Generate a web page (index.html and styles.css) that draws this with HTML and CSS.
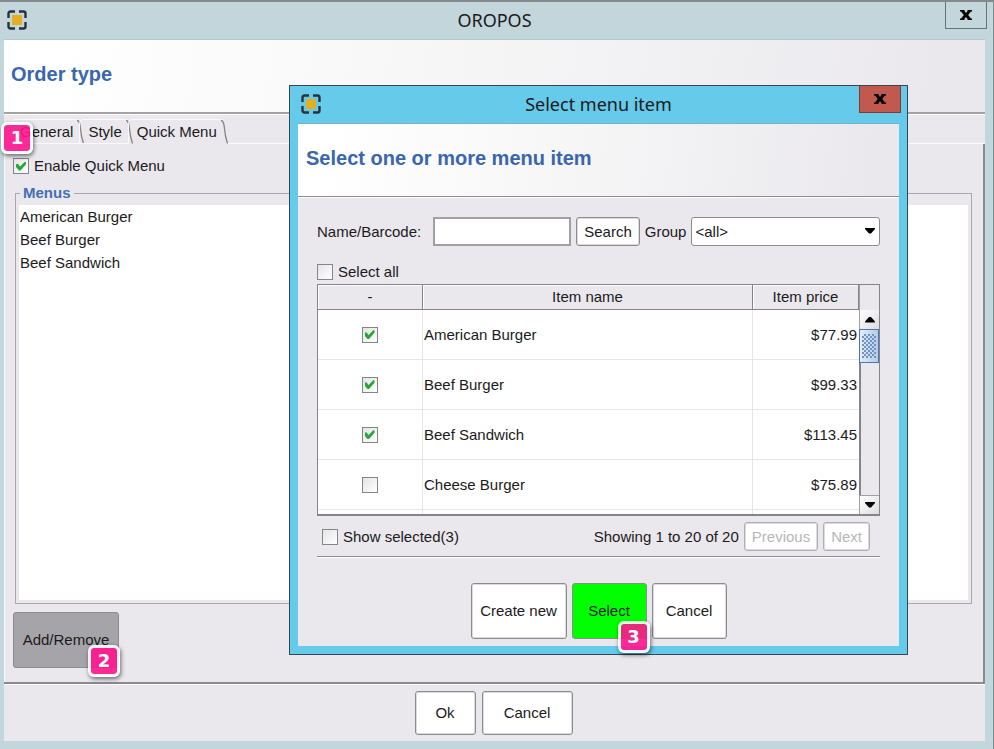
FILE: index.html
```html
<!DOCTYPE html>
<html lang="en">
<head>
<meta charset="utf-8">
<title>OROPOS</title>
<link rel="stylesheet" href="styles.css">
</head>
<body>
<svg class="sprite" aria-hidden="true">
  <symbol id="logo" viewBox="0 0 20 20">
    <path d="M1.500 8V3.500Q1.500 1.500 3.500 1.500H8M12 1.500H16.500Q18.500 1.500 18.500 3.500V8M18.500 12V16.500Q18.500 18.500 16.500 18.500H12M8 18.500H3.500Q1.500 18.500 1.500 16.500V12" fill="none" stroke="#28323b" stroke-width="2.400"/>
    <rect x="5" y="5" width="10" height="10" fill="#e3b024"/>
  </symbol>
  <symbol id="close" viewBox="0 0 12 10">
    <path d="M0 0H4.500V1L6 3 7.500 1V0H12V1.500H11L8.200 5 11 8.500H12V10H7.500V9L6 7 4.500 9V10H0V8.500H1L3.800 5 1 1.500H0Z" fill="#000"/>
  </symbol>
  <symbol id="tab-edge" viewBox="0 0 10 25">
    <path d="M0 1.500Q2 1.500 3 6L4.500 17 6.500 24.500" fill="none" stroke="#858488" stroke-width="1.300"/>
  </symbol>
  <symbol id="down" viewBox="0 0 10 6"><path d="M0 0H10V1L6 5.500H4L0 1Z"/></symbol>
  <symbol id="up" viewBox="0 0 10 6"><path d="M0 5.500H10V4.500L6 0H4L0 4.500Z"/></symbol>
</svg>

<main class="window">
  <header class="titlebar">
    <svg class="logo"><use href="#logo"/></svg>
    <h1 class="caption">OROPOS</h1>
    <button class="close" aria-label="Close window"><svg><use href="#close"/></svg></button>
  </header>
  <div class="content">
    <div class="banner"><h2>Order type</h2></div>
    <div class="tabs" role="tablist">
      <button class="tab" role="tab">General<svg><use href="#tab-edge"/></svg></button>
      <button class="tab" role="tab">Style<svg><use href="#tab-edge"/></svg></button>
      <button class="tab selected" role="tab" aria-selected="true">Quick Menu<svg><use href="#tab-edge"/></svg></button>
      <span class="tab-rest"></span>
      <span class="badge badge-tab">1</span>
    </div>
    <section class="panel">
      <label class="check"><input type="checkbox" checked>Enable Quick Menu</label>
      <fieldset class="menus">
        <legend>Menus</legend>
        <ul>
          <li>American Burger</li>
          <li>Beef Burger</li>
          <li>Beef Sandwich</li>
        </ul>
      </fieldset>
      <div class="panel-actions">
        <span class="marked">
          <button class="btn tall pressed">Add/Remove</button>
          <span class="badge badge-button">2</span>
        </span>
      </div>
    </section>
    <footer class="footer">
      <button class="btn medium ok">Ok</button>
      <button class="btn medium cancel">Cancel</button>
    </footer>
  </div>
</main>

<div class="dialog" role="dialog" aria-labelledby="dialog-caption">
  <header class="titlebar">
    <svg class="logo"><use href="#logo"/></svg>
    <h2 class="caption" id="dialog-caption">Select menu item</h2>
    <button class="close" aria-label="Close dialog"><svg><use href="#close"/></svg></button>
  </header>
  <div class="content">
    <div class="banner"><h2>Select one or more menu item</h2></div>
    <div class="dialog-body">
      <div class="search-row">
        <label for="name">Name/Barcode:</label>
        <input id="name" class="field" type="text">
        <button class="btn">Search</button>
        <label for="group">Group</label>
        <span class="combo">
          <select id="group"><option>&lt;all&gt;</option></select>
          <svg><use href="#down"/></svg>
        </span>
      </div>
      <label class="check"><input type="checkbox">Select all</label>
      <div class="items">
        <table>
          <colgroup><col class="col-check"><col><col class="col-price"></colgroup>
          <thead>
            <tr><th>-</th><th>Item name</th><th>Item price</th></tr>
          </thead>
          <tbody>
            <tr><td><input type="checkbox" aria-label="American Burger" checked></td><td>American Burger</td><td>$77.99</td></tr>
            <tr><td><input type="checkbox" aria-label="Beef Burger" checked></td><td>Beef Burger</td><td>$99.33</td></tr>
            <tr><td><input type="checkbox" aria-label="Beef Sandwich" checked></td><td>Beef Sandwich</td><td>$113.45</td></tr>
            <tr><td><input type="checkbox" aria-label="Cheese Burger"></td><td>Cheese Burger</td><td>$75.89</td></tr>
            <tr><td></td><td></td><td></td></tr>
          </tbody>
        </table>
        <div class="scroll">
          <button aria-label="Scroll up"><svg><use href="#up"/></svg></button>
          <span class="thumb"></span>
          <span class="track"></span>
          <button aria-label="Scroll down"><svg><use href="#down"/></svg></button>
        </div>
      </div>
      <div class="pager">
        <label class="check"><input type="checkbox">Show selected(3)</label>
        <span>Showing 1 to 20 of 20</span>
        <button class="btn" disabled>Previous</button>
        <button class="btn" disabled>Next</button>
      </div>
      <div class="dialog-actions">
        <button class="btn tall create">Create new</button>
        <span class="marked">
          <button class="btn tall primary">Select</button>
          <span class="badge badge-button">3</span>
        </span>
        <button class="btn tall dismiss">Cancel</button>
      </div>
    </div>
  </div>
</div>
</body>
</html>
```
FILE: styles.css
```css
* { box-sizing: border-box; }

body {
  margin: 0;
  font: 15px/18px "Liberation Sans", Arial, sans-serif;
  color: #1c1a1c;
}

h1, h2, ul { margin: 0; padding: 0; }
button, input, select { font: inherit; color: inherit; margin: 0; }
svg { display: block; }
.sprite { display: none; }

/* Windows */
.window {
  display: flex;
  flex-direction: column;
  min-height: 100vh;
  padding: 0 8px 8px 4px;
  background: #c3d6dc;
  border-top: 2px solid #85898b;
  border-right: 1px solid #7f8c91;
}

.titlebar {
  display: flex;
  justify-content: space-between;
  align-items: flex-start;
  height: 38px;
  border-bottom: 1px solid #b5c6cd;
}
.logo { width: 20px; height: 20px; margin: 8px 0 0 3px; }
.caption {
  flex: 1;
  padding: 6px 0 0 17px;
  font: 18px/24px "Noto Sans", "Open Sans", sans-serif;
  text-align: center;
}
.close {
  display: grid;
  place-items: center;
  width: 42px;
  height: 27px;
  margin-right: -2px;
  padding: 0;
  background: transparent;
  border: 1px solid #68727a;
  border-top: 0;
}
.close svg { width: 12px; height: 10px; }

.content {
  flex: 1;
  display: flex;
  flex-direction: column;
  background: #eae8ed;
}
.banner {
  height: 74px;
  padding: 23px 7px 0;
  background: linear-gradient(98deg, #fff 5%, #f5f5f6 50%, #eae8ed 95%);
  border-bottom: 2px solid #a3a3a4;
  box-shadow: 0 1px #fff;
}
.banner h2 { font-size: 20px; line-height: 22px; color: #3a66ae; }

/* Tabs */
.tabs {
  position: relative;
  display: flex;
  height: 30px;
  padding: 5px 0 0 7px;
}
.tab {
  position: relative;
  height: 25px;
  padding: 1px 6px 0 8px;
  background: transparent;
  border: solid #fafafb;
  border-width: 1px 0 1px 1px;
  border-radius: 5px 0 0 0;
}
.tab svg { position: absolute; right: -8px; top: -1px; width: 10px; height: 25px; }
.tab.selected { padding: 0 6px 0 8px; border-bottom-color: transparent; }
.tab-rest { flex: 1; margin-left: 4px; border-bottom: 1px solid #fafafb; }

/* Callout numbers */
.marked { position: relative; display: flex; }
.badge {
  position: absolute;
  z-index: 2;
  width: 32px;
  height: 32px;
  border: 3px solid rgba(255, 255, 255, .86);
  border-radius: 6px;
  background: rgba(255, 20, 140, .9) padding-box;
  box-shadow: 1px 2px 4px rgba(0, 0, 0, .55);
  color: #fff;
  font: bold 18px/26px "DejaVu Sans", sans-serif;
  text-align: center;
}
.badge-tab { left: -3px; top: 8px; }
.badge-button { right: -3px; bottom: -14px; }
.panel .badge-button { right: -1px; bottom: -9px; }

/* Controls */
.check { display: flex; align-items: center; gap: 5px; }
input[type="checkbox"] {
  appearance: none;
  display: grid;
  place-items: center;
  width: 16px;
  height: 16px;
  border: 1px solid #858488;
  background: linear-gradient(135deg, #e4e3e7, #fff);
}
input[type="checkbox"]:checked::before {
  content: "";
  width: 10px;
  height: 9px;
  background: #2ba636;
  clip-path: polygon(0 30%, 20% 25%, 40% 55%, 90% 0, 100% 5%, 100% 30%, 45% 100%, 30% 100%, 0 60%);
}
.btn {
  height: 29px;
  padding: 0 7px;
  background: #fff;
  border: 1px solid #8c8b8f;
  border-radius: 3px;
  box-shadow: inset 0 0 0 1px #dcdbdf;
}
.btn:disabled { color: #b8b6ba; border-color: #b0aeb2; }
.btn.medium { height: 44px; }
.btn.tall { height: 56px; padding: 0 7px; }
.btn.create { width: 96px; }
.btn.primary { width: 75px; background: #0f0; box-shadow: none; }
.btn.dismiss { width: 75px; }
.btn.ok { width: 61px; }
.btn.cancel { width: 91px; }
.btn.pressed { width: 106px; background: #a5a4a8; box-shadow: none; }
.field { width: 138px; height: 29px; border: 2px solid #a09fa3; background: #fff; }
.combo { position: relative; flex: 1; }
.combo select {
  appearance: none;
  display: block;
  width: 100%;
  height: 29px;
  padding: 0 3px;
  background: #fff;
  border: 1px solid #8c8b8f;
  border-radius: 3px;
}
.combo svg { position: absolute; right: 5px; top: 11px; width: 10px; height: 6px; }

/* Main window panel */
.panel {
  flex: 1;
  display: flex;
  flex-direction: column;
  padding: 13px 11px 14px 8px;
  border: solid #8b8a8c;
  border-width: 0 2px 2px 0;
  box-shadow: inset 1px 0 #fafafb, 0 1px #fff;
}
.panel .check { padding-left: 1px; }
/* The white list area fills the frame below the legend, whatever its height */
.menus {
  flex: 1;
  min-width: 0;
  margin: 9px 0 8px 3px;
  padding: 3px;
  border: 1px solid #a9a8ac;
  background: linear-gradient(#fff, #fff) 0 8px no-repeat content-box;
}
.menus legend { margin-left: 1px; padding: 0 3px; font-weight: bold; color: #426fb5; }
.menus ul { padding-left: 1px; list-style: none; }
.menus li { line-height: 23px; }
.panel-actions { display: flex; padding-left: 1px; }
.footer { display: flex; justify-content: center; gap: 6px; padding: 7px 2px 6px 0; }

/* Dialog */
.dialog {
  position: absolute;
  left: 289px;
  top: 85px;
  width: 619px;
  padding: 0 8px 8px;
  background: #66caea;
  border: 1px solid #37474f;
}
.dialog .titlebar { border-bottom-color: #74b5cc; }
.dialog .close { background: #c1594f; border-color: #7c3d38; }
.dialog .banner { height: 73px; padding-left: 8px; border-bottom-width: 1px; border-color: #8c8b8f; }
.dialog-body { padding: 20px 19px 7px; }
.search-row { display: flex; align-items: center; gap: 5px; margin-bottom: 17px; }
.search-row .field { margin-left: 7px; }
.items {
  display: flex;
  height: 232px;
  margin-top: 3px;
  overflow: hidden;
  border: solid #858488;
  border-width: 1px 1px 2px;
}
table { flex: 1; border-collapse: separate; border-spacing: 0; table-layout: fixed; background: #fff; }
.col-check { width: 105px; }
.col-price { width: 106px; }
th {
  height: 25px;
  padding: 0;
  font-weight: normal;
  background: #eae8ed;
  border: solid #858488;
  border-width: 0 1px 1px 0;
  box-shadow: inset 1px 1px #fff;
}
td {
  height: 50px;
  padding: 0 2px 0 1px;
  border: solid #e6e5ea;
  border-width: 0 1px 1px 0;
}
td:first-child input { margin: 0 auto; }
td:last-child { text-align: right; border-right: 0; }
.scroll {
  display: flex;
  flex-direction: column;
  width: 20px;
  padding-top: 25px;
  background: #eae8ed;
  box-shadow: inset 1px 0 #a09fa3;
}
.scroll button {
  display: grid;
  place-items: center;
  height: 19px;
  padding: 0;
  border: 1px solid #a09fa3;
  border-width: 0 0 0 1px;
  background: linear-gradient(135deg, #fff, #dddce0);
}
.scroll button:last-child { border-top-width: 1px; }
.scroll svg { width: 10px; height: 6px; }
.thumb {
  height: 34px;
  padding: 4px 2px;
  border: 1px solid #4c74b4;
  background:
    repeating-conic-gradient(#6f93c4 0 25%, transparent 0 50%) 0 0 / 4px 4px content-box,
    linear-gradient(90deg, #e2edf7, #b4cce4);
}
.track { flex: 1; border-left: 2px solid #858488; }
.pager { display: flex; align-items: center; gap: 5px; padding: 6px 10px 5px 5px; border-bottom: 1px solid #8c8b8f; box-shadow: 0 1px #fff; }
.pager .check { margin-right: auto; }
.dialog-actions { display: flex; justify-content: center; gap: 5px; padding-top: 26px; }
```
